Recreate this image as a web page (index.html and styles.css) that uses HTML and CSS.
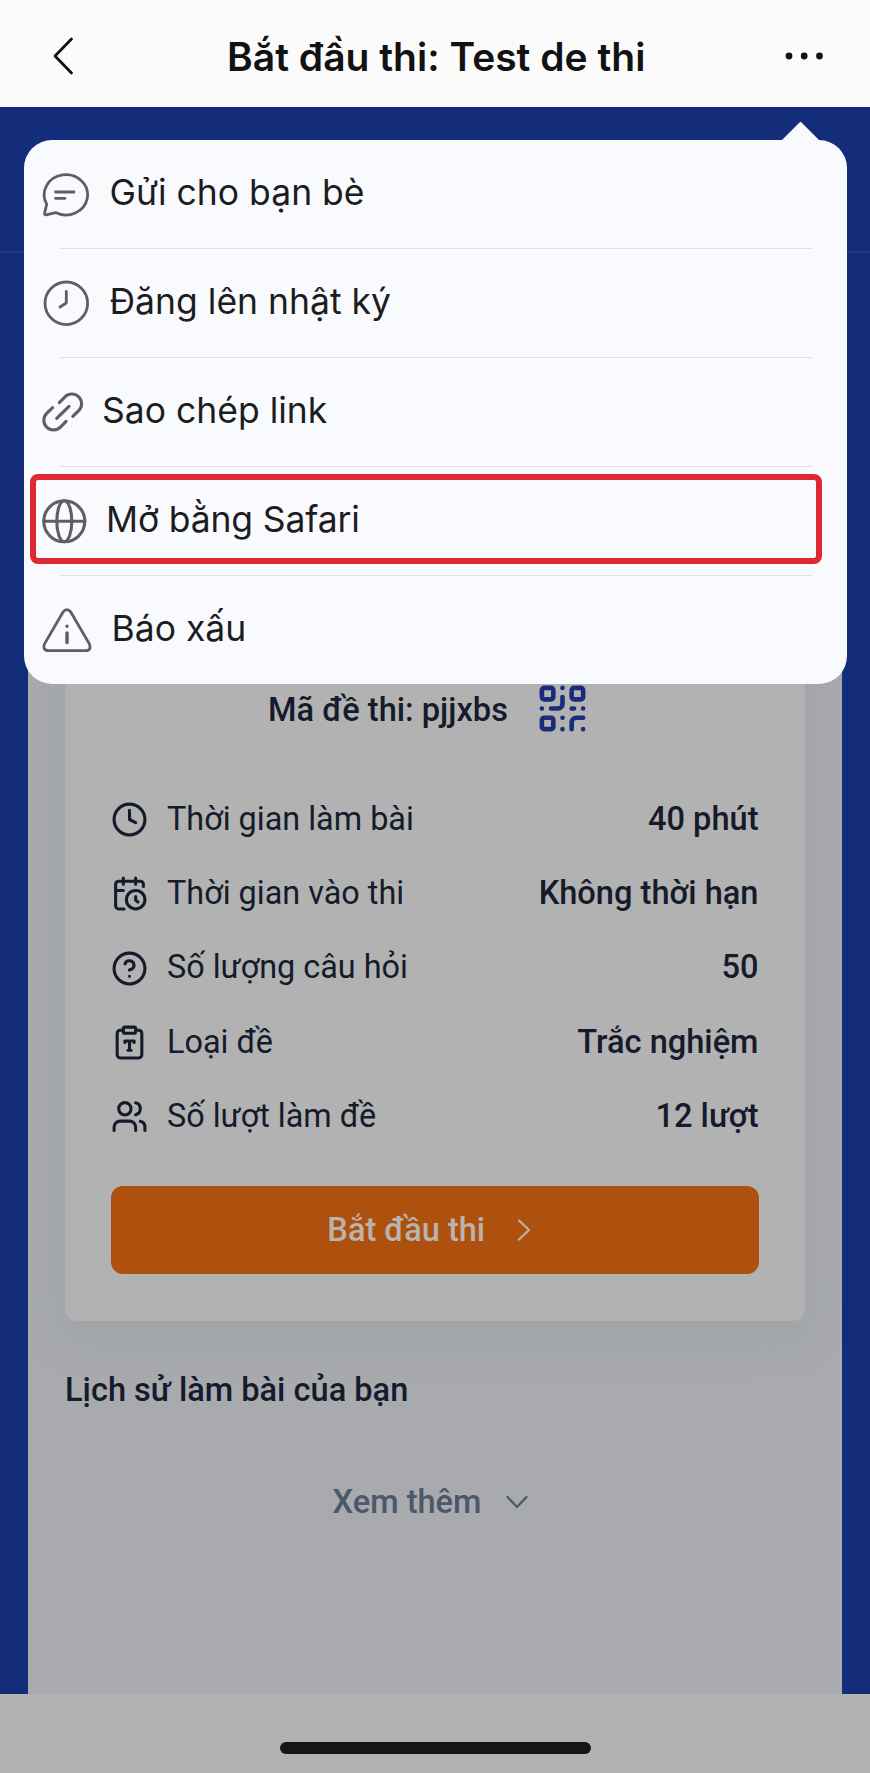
FILE: index.html
```html
<!DOCTYPE html>
<html lang="vi">
<head>
<meta charset="utf-8">
<title>Bắt đầu thi</title>
<link rel="stylesheet" href="styles.css">
</head>
<body>
<div class="screen">
  <header class="topbar">
    <svg class="back" viewBox="0 0 24 40"><path d="M20.500 3 4 20l16.500 17"/></svg>
    <h1 class="topbar-title">Bắt đầu thi: Test de thi</h1>
    <svg class="more" viewBox="0 0 40 8"><circle cx="4" cy="4" r="3.400"/><circle cx="19.200" cy="4" r="3.400"/><circle cx="34.500" cy="4" r="3.400"/></svg>
  </header>

  <main class="page">
    <div class="strip"></div>
    <section class="sheet">
      <div class="card">
        <div class="code"><span class="t">Mã đề thi: pjjxbs</span>
          <svg class="qr" viewBox="0 0 24 24"><rect x="3" y="3" width="5" height="5" rx="1"/><rect x="16" y="3" width="5" height="5" rx="1"/><rect x="3" y="16" width="5" height="5" rx="1"/><path d="M21 16h-3a2 2 0 0 0-2 2v3M21 21v.01M12 7v3a2 2 0 0 1-2 2H7M3 12h.01M12 3h.01M12 16v.01M16 12h1M21 12v.01M12 21v-.01"/></svg>
        </div>
        <ul class="facts">
          <li class="fact"><svg class="ico" viewBox="0 0 24 24"><circle cx="12" cy="12" r="10"/><path d="M12 6v6l4 2"/></svg><span class="t label">Thời gian làm bài</span><b class="t value">40 phút</b></li>
          <li class="fact"><svg class="ico" viewBox="0 0 24 24"><path d="M21 7.500V6a2 2 0 0 0-2-2H5a2 2 0 0 0-2 2v14a2 2 0 0 0 2 2h3.500M16 2v4M8 2v4M3 10h5M17.500 17.500 16 16.300V14"/><circle cx="16" cy="16" r="6"/></svg><span class="t label">Thời gian vào thi</span><b class="t value">Không thời hạn</b></li>
          <li class="fact"><svg class="ico" viewBox="0 0 24 24"><circle cx="12" cy="12" r="10"/><path d="M9.090 9a3 3 0 0 1 5.830 1c0 2-3 3-3 3M12 17h.01"/></svg><span class="t label">Số lượng câu hỏi</span><b class="t value">50</b></li>
          <li class="fact"><svg class="ico" viewBox="0 0 24 24"><rect x="8" y="2" width="8" height="4" rx="1"/><path d="M16 4h2a2 2 0 0 1 2 2v14a2 2 0 0 1-2 2H6a2 2 0 0 1-2-2V6a2 2 0 0 1 2-2h2M9 12v-1h6v1M11 17h2M12 11v6"/></svg><span class="t label">Loại đề</span><b class="t value">Trắc nghiệm</b></li>
          <li class="fact"><svg class="ico" viewBox="0 0 24 24"><path d="M16 21v-2a4 4 0 0 0-4-4H6a4 4 0 0 0-4 4v2M22 21v-2a4 4 0 0 0-3-3.870M16 3.130a4 4 0 0 1 0 7.750"/><circle cx="9" cy="7" r="4"/></svg><span class="t label">Số lượt làm đề</span><b class="t value">12 lượt</b></li>
        </ul>
        <button class="start"><span class="t">Bắt đầu thi</span><svg class="chev" viewBox="0 0 14 22"><path d="M2 1.500 12 11 2 20.500"/></svg></button>
      </div>
      <h2 class="history">Lịch sử làm bài của bạn</h2>
      <div class="load"><span class="t">Xem thêm</span><svg class="chev-down" viewBox="0 0 22 14"><path d="M1.500 2 11 12l9.500-10"/></svg></div>
    </section>
  </main>
  <footer class="home"><span class="home-bar"></span></footer>

  <nav class="menu">
    <div class="menu-item"><svg class="mi w48" viewBox="0 0 48 48"><path d="M4.700 34.300A21.700 20.200 0 1 1 13.500 42.600L4.200 44.800Q2.300 45 2.600 43.300ZM13.500 22h18.500M13.500 28.300h9.500"/></svg><span class="t">Gửi cho bạn bè</span></div>
    <div class="menu-item"><svg class="mi w48" viewBox="0 0 48 48"><circle cx="24.300" cy="24.300" r="21.300"/><path d="M24.300 12.500V24L18 28"/></svg><span class="t">Đăng lên nhật ký</span></div>
    <div class="menu-item"><svg class="mi w42 thick" viewBox="0 0 42 42"><path d="M17.300 11.600 23 5.800A9.700 9.700 0 0 1 36.700 19.600L30.800 25.400M24.100 30.400 18.400 36.200A9.700 9.700 0 0 1 4.700 22.400L10.600 16.600M14.700 27.300 27 15.300"/></svg><span class="t">Sao chép link</span></div>
    <div class="menu-item"><svg class="mi w46 thick" viewBox="0 0 46 46"><circle cx="22.300" cy="23.300" r="20.500"/><ellipse cx="22.300" cy="23.300" rx="7.500" ry="20.500"/><path d="M1.800 23.300h41"/></svg><span class="t safari">Mở bằng Safari</span><i class="highlight"></i></div>
    <div class="menu-item"><svg class="mi w50" viewBox="0 0 50 46"><path d="M20.900 5.200Q24.900 0 28.900 5.200L47.200 36.600Q50 43.400 43.500 43.700H6.500Q0 43.400 2.700 36.600Z"/><path class="stem" d="M25 26v9.500M25 19.300v.01"/></svg><span class="t">Báo xấu</span></div>
  </nav>
</div>
</body>
</html>
```
FILE: styles.css
```css
* { box-sizing: border-box; margin: 0; padding: 0; }
body { width: 870px; font-family: Roboto, sans-serif; }
svg { flex: none; fill: none; stroke: currentColor; stroke-linecap: round; stroke-linejoin: round; }
.t { white-space: nowrap; }
.screen { position: relative; width: 870px; height: 1773px; display: flex; flex-direction: column; overflow: hidden; }

.topbar { height: 107px; background: #fbfbfb; color: #121212; display: flex; align-items: center; justify-content: space-between; padding: 4px 44.500px 0 51px; font-family: Inter, sans-serif; }
.topbar-title { font-size: 39px; font-weight: 600; line-height: 48px; white-space: nowrap; padding: 2px 0 0 12px; }
.back { width: 24px; height: 40px; stroke-width: 2.800; }
.more { width: 40px; height: 8px; fill: currentColor; stroke: none; }

.page { height: 1587px; background: #132d7a; padding: 0 28px; display: flex; flex-direction: column; }
.strip { height: 146px; margin: 0 -28px; border-bottom: 2px solid #203980; flex: none; }
.sheet { margin-top: 150px; flex: 1; background: #a8aaad; padding: 60px 37px 0; color: #151b2b; font-size: 32.600px; }
.card { height: 857.500px; background: #b2b2b2; border-radius: 12px; padding: 215px 46.500px 0 46px; box-shadow: 0 16px 44px rgba(130, 138, 148, .25); }
.code { height: 60px; display: flex; align-items: center; justify-content: center; gap: 27.500px; padding-right: 11px; font-weight: 500; }
.code .t { padding-top: 3px; }
.qr { width: 55px; height: 55px; stroke: #182b7d; stroke-width: 2; }
.facts { list-style: none; margin-top: 44.500px; }
.fact { height: 74.300px; display: flex; align-items: center; }
.ico { width: 37px; height: 37px; stroke-width: 2; }
.fact .t { padding-bottom: 2px; }
.label { margin-left: 19px; font-size: 32.400px; }
.value { margin-left: auto; font-weight: 500; }
.start { width: 100%; height: 88px; margin-top: 32.500px; border: 0; border-radius: 12px; background: #ae500e; color: #b9b2ad; font: 500 32.500px Roboto, sans-serif; display: flex; align-items: center; justify-content: center; gap: 32px; padding-right: 11px; }
.start .t { padding-bottom: 1px; }
.chev { width: 14px; height: 22px; stroke-width: 2.200; }
.history { margin-top: 50px; font-size: 32.600px; font-weight: 500; line-height: 38px; white-space: nowrap; }
.load { margin-top: 74px; display: flex; align-items: center; justify-content: center; gap: 25px; padding-right: 9px; color: #4c5769; font-weight: 500; line-height: 38px; }
.chev-down { width: 22px; height: 14px; stroke-width: 2.200; }

.home { height: 79px; background: #b2b2b2; display: flex; justify-content: center; padding-top: 48px; }
.home-bar { width: 311px; height: 12px; border-radius: 6px; background: #161616; }

.menu { position: absolute; left: 23.500px; top: 139.500px; width: 823px; height: 544.500px; border-radius: 28px; background: #f9fafd; color: #1d1d1f; font: 400 35.500px Inter, sans-serif; }
.menu::before { content: ""; position: absolute; left: 758px; top: -18px; width: 38px; height: 19px; background: inherit; clip-path: polygon(50% 0, 100% 100%, 0 100%); }
.menu-item { position: relative; height: 109px; padding-left: 18px; display: flex; align-items: center; }
.menu-item .t { padding-bottom: 3px; }
.menu-item + .menu-item::before { content: ""; position: absolute; left: 35px; right: 35px; top: -.5px; height: 1px; background: #e0e1e4; }
.mi { color: #5f5f61; stroke-width: 2.800; margin-right: 20px; }
.thick { stroke-width: 3.100; margin-right: 18.500px; }
.safari { letter-spacing: -.15px; }
.w48 { width: 48px; height: 48px; }
.w42 { width: 42px; height: 42px; }
.w46 { width: 46px; height: 46px; }
.w50 { width: 50px; height: 46px; }
.stem { stroke-width: 3.500; }
.highlight { position: absolute; left: 6.500px; top: 7.500px; width: 792px; height: 90px; border: 6px solid #df2831; border-radius: 8px; }
```
